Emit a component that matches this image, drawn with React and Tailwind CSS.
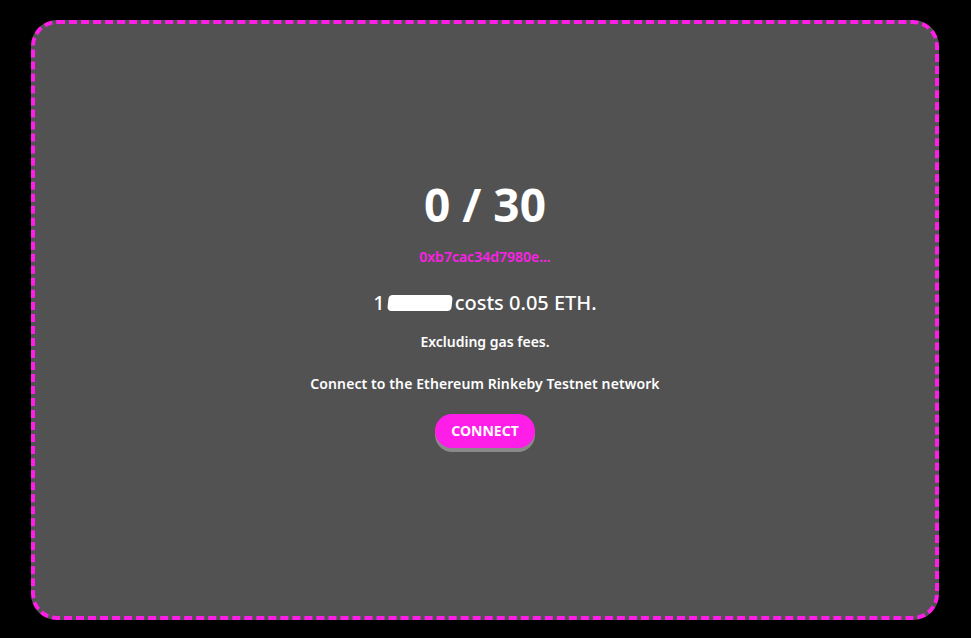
import React from "react";

const App = () => {
  return (
    <div
      className="min-h-screen bg-black pt-5 pb-[18px] pl-[31px] pr-8"
      style={{ fontFamily: '"Noto Sans", "Open Sans", sans-serif' }}
    >
      <div className="h-[600px] rounded-[26px] border-4 border-dashed border-[#ff1ee8] bg-[#525252] flex flex-col items-center justify-center text-white">
        <h1 className="text-[46px] font-bold leading-none mt-[-12px]">0 / 30</h1>
        <p className="mt-[19px] text-[14px] font-semibold text-[#ff1ee8]">0xb7cac34d7980e...</p>

        <p className="mt-[21px] text-[20px] font-medium flex items-center">
          <span>1</span>
          <span className="mx-[3px] inline-block w-[64px] h-[16px] bg-white rounded-[4px] skew-x-[-6deg]" />
          <span>costs 0.05 ETH.</span>
        </p>

        <p className="mt-[13px] text-[14px] font-semibold">Excluding gas fees.</p>

        <p className="mt-[21px] text-[14px] font-semibold tracking-[0.1px]">
          Connect to the Ethereum Rinkeby Testnet network
        </p>

        <button className="mt-[20px] h-[34px] w-[100px] rounded-full bg-[#ff1ee8] text-white text-[14px] font-bold shadow-[0_4px_0_#8a8a8a]">
          CONNECT
        </button>
      </div>
    </div>
  );
};

export default App;
